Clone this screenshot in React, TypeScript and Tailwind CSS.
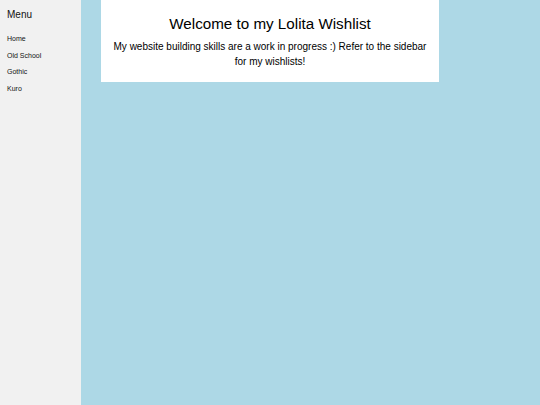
const links = ['Home', 'Old School', 'Gothic', 'Kuro'];

export default function App() {
  return (
    <div className="flex min-h-[405px] font-['Liberation_Sans',Arial,sans-serif] text-black">
      {/* Sidebar */}
      <aside className="w-[81px] shrink-0 bg-[#f1f1f1]">
        <h2 className="px-[7px] pt-[8px] text-[10px] leading-[14px] text-[#111]">Menu</h2>
        <nav className="mt-[9px] flex flex-col">
          {links.map((l) => (
            <a key={l} href="#" className="block px-[7px] text-[7px] leading-[16.5px] text-[#111]">
              {l}
            </a>
          ))}
        </nav>
      </aside>

      {/* Main */}
      <main className="flex-1 bg-[#add8e6]">
        <div className="ml-[20px] w-[338px] bg-white px-[6px] pt-[15px] pb-[13px] text-center">
          <h1 className="text-[15.2px] leading-[18px]">Welcome to my Lolita Wishlist</h1>
          <p className="mt-[6px] text-[10px] leading-[15px]">
            My website building skills are a work in progress :) Refer to the sidebar for my wishlists!
          </p>
        </div>
      </main>
    </div>
  );
}
